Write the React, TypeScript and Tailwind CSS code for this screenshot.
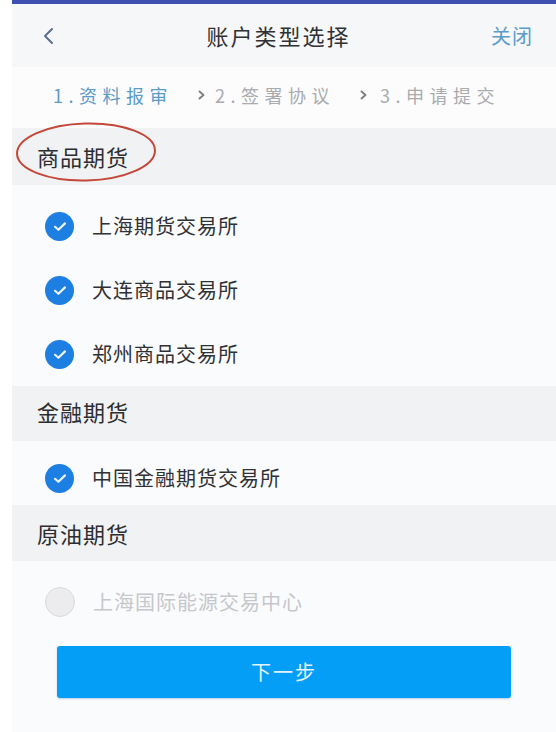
import React from 'react';

type Exchange = {
  name: string;
  checked: boolean;
  disabled?: boolean;
};

const font = { fontFamily: '"Noto Sans CJK SC", "Noto Sans", sans-serif' };

function CheckCircle({ checked, disabled }: { checked: boolean; disabled?: boolean }) {
  if (disabled || !checked) {
    return <span className="block h-[30px] w-[30px] shrink-0 rounded-full border border-[#d9dadd] bg-[#ececee]" />;
  }
  return (
    <span className="flex h-[29px] w-[29px] shrink-0 items-center justify-center rounded-full bg-[#1d7fe2]">
      <svg width="14" height="11" viewBox="0 0 14 11" fill="none">
        <path d="M2 5.8 L5.4 8.8 L12 2.4" stroke="#eaf4ff" strokeWidth="2.2" strokeLinecap="round" strokeLinejoin="round" />
      </svg>
    </span>
  );
}

function Row({ item, className }: { item: Exchange; className: string }) {
  return (
    <div className={`flex items-center pl-[33px] ${className}`}>
      <CheckCircle checked={item.checked} disabled={item.disabled} />
      <span
        className={`ml-[18px] text-[20px] tracking-[1px] ${item.disabled ? 'text-[#c6c7ca]' : 'text-[#303134]'}`}
      >
        {item.name}
      </span>
    </div>
  );
}

function SectionTitle({ title, className }: { title: string; className: string }) {
  return (
    <div className={`flex items-center bg-[#f1f2f4] pl-[25px] text-[22px] tracking-[1px] text-[#2c2d30] ${className}`}>
      {title}
    </div>
  );
}

function StepArrow() {
  return (
    <svg width="7" height="10" viewBox="0 0 7 10" fill="none" className="shrink-0">
      <path d="M1.5 1.5 L5.5 5 L1.5 8.5" stroke="#7d7f84" strokeWidth="1.9" strokeLinecap="round" strokeLinejoin="round" />
    </svg>
  );
}

const commodity: Exchange[] = [
  { name: '上海期货交易所', checked: true },
  { name: '大连商品交易所', checked: true },
  { name: '郑州商品交易所', checked: true },
];

export default function App() {
  return (
    <div className="min-h-[732px] w-[556px] bg-white pl-[12px]" style={font}>
      <div className="relative min-h-[732px] bg-[#fafbfc]">
        <div className="h-[4px] bg-[#3e50b2]" />

        <div className="flex h-[63px] items-center justify-between bg-[#f6f7f9] pl-[30px] pr-[23px]">
          <svg width="12" height="18" viewBox="0 0 12 18" fill="none">
            <path d="M10 2 L3 9 L10 16" stroke="#5a6f8c" strokeWidth="2" strokeLinecap="round" strokeLinejoin="round" />
          </svg>
          <span className="ml-[12px] text-[22px] tracking-[2px] text-[#303134]">账户类型选择</span>
          <span className="text-[20px] tracking-[1px] text-[#5b9ccb]">关闭</span>
        </div>

        <div className="flex h-[61px] items-center bg-[#fcfcfd] pb-[5px] pl-[41px] text-[18px] tracking-[5.5px]">
          <span className="text-[#5b9bc6]">1.资料报审</span>
          <span className="ml-[25px]">
            <StepArrow />
          </span>
          <span className="ml-[10px] text-[#a9abae]">2.签署协议</span>
          <span className="ml-[25px]">
            <StepArrow />
          </span>
          <span className="ml-[13px] text-[#a9abae]">3.申请提交</span>
        </div>

        <SectionTitle title="商品期货" className="h-[57px]" />
        <div className="pt-[9px]">
          {commodity.map((item) => (
            <Row key={item.name} item={item} className="h-16" />
          ))}
        </div>

        <SectionTitle title="金融期货" className="h-[55px] pb-[4px]" />
        <Row item={{ name: '中国金融期货交易所', checked: true }} className="h-16 pt-[10px]" />

        <SectionTitle title="原油期货" className="h-[56px]" />
        <Row item={{ name: '上海国际能源交易中心', checked: false, disabled: true }} className="h-16 pt-[18px]" />

        <div className="mx-[45px] mt-[21px]">
          <button
            type="button"
            className="flex h-[52px] w-full items-center justify-center rounded-[3px] bg-[#049ef6] text-[20px] tracking-[2px] text-[#e3f3ff] shadow-[0_1px_2px_rgba(0,80,160,0.25)]"
          >
            下一步
          </button>
        </div>

        {/* hand-drawn red ring round the first section title */}
        <svg className="pointer-events-none absolute left-[1px] top-[120px]" width="146" height="64" viewBox="0 0 146 64" fill="none">
          <ellipse cx="73" cy="32" rx="69" ry="28.5" stroke="#c5473a" strokeWidth="2" transform="rotate(-1.5 73 32)" />
        </svg>
      </div>
    </div>
  );
}
